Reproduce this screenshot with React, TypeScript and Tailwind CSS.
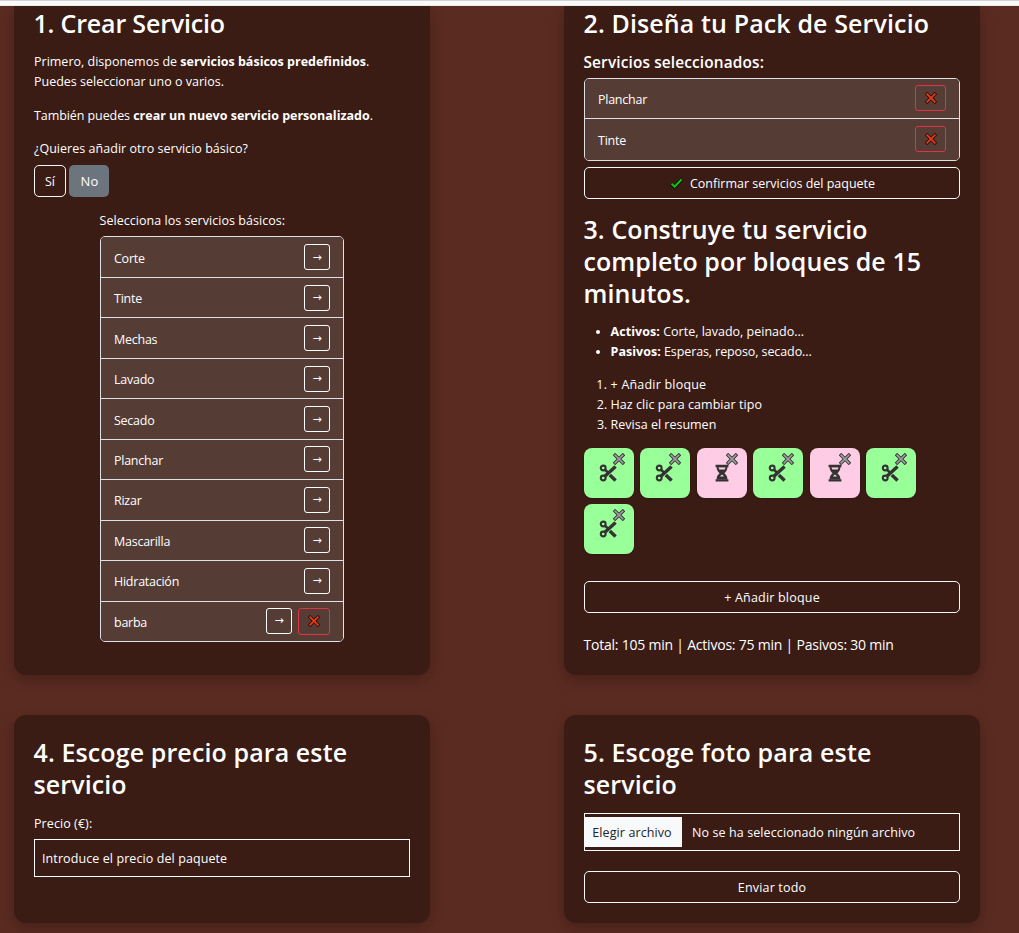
import React from "react";

type Kids = { children: React.ReactNode };

const Heading = ({ children, className = "tracking-[0.11px]" }: Kids & { className?: string }) => (
  <h2 className={`-ml-[0.5px] text-[25px] leading-[32px] font-semibold ${className}`}>{children}</h2>
);

const Card = ({ children, className }: Kids & { className: string }) => (
  <section
    className={`w-[416px] rounded-[12px] bg-[#3a1c15] px-5 shadow-[0_5px_14px_rgba(0,0,0,0.22)] ${className}`}
  >
    {children}
  </section>
);

const OutlineButton = ({ children, className = "w-full" }: Kids & { className?: string }) => (
  <button
    className={`flex h-8 items-center justify-center rounded-[5px] border border-[#f8f9fa] text-[12.5px] ${className}`}
  >
    {children}
  </button>
);

const Cross = ({ fill, outline, size }: { fill: string; outline: string; size: number }) => (
  <svg width={size} height={size} viewBox="0 0 12 12" fill="none" strokeLinecap="square">
    <path d="M2.2 2.2 9.8 9.8M9.8 2.2 2.2 9.8" stroke={outline} strokeWidth="3.4" />
    <path d="M2.2 2.2 9.8 9.8M9.8 2.2 2.2 9.8" stroke={fill} strokeWidth="1.7" />
  </svg>
);

const Check = () => (
  <svg width="13" height="12" viewBox="0 0 13 12" fill="none">
    <path d="M1 6.4 4.6 10 12 2.2" stroke="#0b1a06" strokeWidth="3.6" />
    <path d="M1.5 6.6 4.6 9.6 11.6 2.4" stroke="#16c60c" strokeWidth="2" />
  </svg>
);

const Scissors = () => (
  <svg width="18" height="18" viewBox="0 0 18 18" fill="none" stroke="#333333">
    <circle cx="4.2" cy="4" r="2.4" strokeWidth="2.1" />
    <circle cx="4.2" cy="14" r="2.4" strokeWidth="2.1" />
    <path d="M5.6 12.4 16.6 2.4" strokeWidth="3.4" />
    <path d="M5.6 5.3 9 8.6" strokeWidth="2.6" />
    <path d="M10.8 11 16.6 16.4" strokeWidth="3.4" />
  </svg>
);

const Hourglass = () => (
  <svg width="14" height="18" viewBox="0 0 14 18" fill="#333333">
    <path d="M.6.8h12.8v2.4H.6zM.6 15.200h12.800v2.400H.6z" />
    <path
      fillRule="evenodd"
      d="M1.600 3h10.800c0 3-1.200 4.500-3 6.200 1.800 1.600 3 3 3 6.200H1.600c0-3.200 1.200-4.600 3-6.200C2.800 7.500 1.600 6 1.600 3zM3.500 3.200c.1 1 .4 1.700.9 2.400h5.200c.5-.7.800-1.400.9-2.400zM7 10.600c-.9.700-1.600 1.300-2 2h4c-.4-.7-1.100-1.300-2-2z"
    />
  </svg>
);

const DeleteButton = ({ className }: { className: string }) => (
  <button className={`flex items-center justify-center rounded-[3px] border border-[#dc3545] ${className}`}>
    <Cross fill="#f03a17" outline="#2a0f0a" size={12} />
  </button>
);

const ArrowButton = () => (
  <button className="flex size-[26px] items-center justify-center rounded-[3px] border border-white font-['DejaVu_Sans',sans-serif] text-[11px] leading-none">
    →
  </button>
);

const Row = ({ name, children, className = "h-[40.45px]" }: Kids & { name: string; className?: string }) => (
  <li
    className={`flex items-center justify-between border-b border-[#dee2e6] bg-[#553c35] px-[13px] last:border-b-0 ${className}`}
  >
    <span className="pt-[3px] text-[12.5px] tracking-[-0.25px]">{name}</span>
    <div className="flex gap-[6px]">{children}</div>
  </li>
);

const basicServices = ["Corte", "Tinte", "Mechas", "Lavado", "Secado", "Planchar", "Rizar", "Mascarilla", "Hidratación"];
const blocks = ["active", "active", "passive", "active", "passive", "active", "active"];

export default function App() {
  return (
    <div className="h-[933px] w-[1019px] overflow-hidden bg-[#5a2b21] font-['Open_Sans','Noto_Sans',sans-serif] text-[12.5px] leading-[20px] text-white">
      <div className="h-[6px] border-t border-b border-t-[#d3d2d2] border-b-[#e9ebe6] bg-[#fafafa]" />
      <main className="grid h-[927px] grid-cols-[416px_416px] content-start gap-x-[134px] gap-y-10 overflow-hidden pl-[14px]">
        <Card className="h-[669px] rounded-t-none pt-[1px]">
          <Heading className="-tracking-[0.18px]">1. Crear Servicio</Heading>
          <p className="mt-[13px]">
            Primero, disponemos de <b className="font-bold">servicios básicos predefinidos</b>.<br />
            Puedes seleccionar uno o varios.
          </p>
          <p className="mt-[14px]">
            <span className="-tracking-[0.08px]">También puedes </span>
            <b className="font-bold">crear un nuevo servicio personalizado</b>.
          </p>
          <p className="mt-[13px] tracking-[0.03px]">¿Quieres añadir otro servicio básico?</p>
          <div className="mt-[6px] flex gap-[3px]">
            <OutlineButton className="w-[32px] pt-[1px]">Sí</OutlineButton>
            <button className="h-8 w-[40px] rounded-[5px] bg-[#6c757d] pb-[1px] pl-[1px] text-[13px] tracking-[0.2px]">No</button>
          </div>
          <div className="mx-auto mt-[14px] w-[244px]">
            <label className="-ml-[0.5px] block tracking-[0.04px]">Selecciona los servicios básicos:</label>
            <ul className="mt-[5px] overflow-hidden rounded-[5px] border border-[#dee2e6]">
              {basicServices.map((name, i) => (
                <Row key={name} name={name} className={i === 0 ? "h-[41px]" : "h-[40.45px]"}>
                  <ArrowButton />
                </Row>
              ))}
              <Row name="barba" className="h-[39.9px]">
                <ArrowButton />
                <DeleteButton className="h-[27px] w-[32px]" />
              </Row>
            </ul>
          </div>
        </Card>

        <Card className="h-[669px] rounded-t-none pt-[1px]">
          <Heading className="tracking-[0.12px]">2. Diseña tu Pack de Servicio</Heading>
          <h5 className="mt-[14px] -ml-[0.5px] text-[15.4px] leading-[20px] font-semibold tracking-[0.14px]">
            Servicios seleccionados:
          </h5>
          <ul className="mt-[5px] overflow-hidden rounded-[5px] border border-[#dee2e6]">
            {["Planchar", "Tinte"].map((name) => (
              <Row key={name} name={name} className="h-[40.3px]">
                <DeleteButton className="mb-[0.5px] h-[26px] w-[31px]" />
              </Row>
            ))}
          </ul>
          <OutlineButton className="mt-[6.4px] w-full gap-[7px] pl-[1px]">
            <Check />
            <span className="pt-[2px]">Confirmar servicios del paquete</span>
          </OutlineButton>
          <Heading className="mt-[14px] tracking-[0.08px]">
            3. Construye tu servicio completo por bloques de 15 minutos.
          </Heading>
          <ul className="mt-[13px] list-disc pl-[26.6px]">
            <li>
              <b className="font-bold tracking-[0.05px]">Activos:</b> Corte, lavado, peinado...
            </li>
            <li>
              <b className="font-bold tracking-[0.02px]">Pasivos:</b>
              <span className="-tracking-[0.1px]"> Esperas, reposo, secado...</span>
            </li>
          </ul>
          <ol className="mt-[13px] list-decimal pl-[26.6px] tracking-[0.05px]">
            <li className="tracking-[0.2px]">+ Añadir bloque</li>
            <li>Haz clic para cambiar tipo</li>
            <li className="tracking-[0px]">Revisa el resumen</li>
          </ol>
          <div className="mt-[13px] flex flex-wrap gap-x-[6.6px] gap-y-[6px] pr-[1px]">
            {blocks.map((kind, i) => (
              <div
                key={i}
                className={`relative h-[50px] w-[49.9px] rounded-[8px] pt-[16.400px] shadow-[0_1px_3px_rgba(0,0,0,0.2)] ${
                  kind === "active" ? "bg-[#99ff99] pl-[15px]" : "bg-[#ffcce6] pl-[18px]"
                }`}
              >
                {kind === "active" ? <Scissors /> : <Hourglass />}
                <span className="absolute top-[5px] right-[9px]">
                  <Cross fill="#9d9d9d" outline="#333333" size={12} />
                </span>
              </div>
            ))}
          </div>
          <OutlineButton className="mt-[26.6px] w-full pt-[2px] tracking-[0.2px]">+ Añadir bloque</OutlineButton>
          <p className="mt-[22px] -ml-[0.5px] text-[14px] tracking-[-0.22px]">
            Total: 105 min | Activos: 75 min | Pasivos: 30 min
          </p>
        </Card>

        <Card className="h-[208px] pt-[21px]">
          <Heading>4. Escoge precio para este servicio</Heading>
          <label className="mt-[14px] block tracking-[0.08px]">Precio (€):</label>
          <input
            className="mt-[5px] block h-[38px] w-full border border-white bg-transparent px-[7px] tracking-[0.09px] text-white placeholder:text-white"
            placeholder="Introduce el precio del paquete"
          />
        </Card>

        <Card className="h-[208px] pt-[21px]">
          <Heading className="tracking-[0.13px]">5. Escoge foto para este servicio</Heading>
          <div className="mt-[13px] flex h-[38px] items-center border border-white tracking-[0.1px]">
            <span className="flex h-[30px] w-[97px] items-center justify-center bg-[#f8f9fa] pt-[1px] pr-[3px] text-[#212529]">
              Elegir archivo
            </span>
            <span className="ml-[10px] pt-[1px]">No se ha seleccionado ningún archivo</span>
          </div>
          <OutlineButton className="mt-5 w-full pt-[1px] tracking-[0.17px]">Enviar todo</OutlineButton>
        </Card>
      </main>
    </div>
  );
}
